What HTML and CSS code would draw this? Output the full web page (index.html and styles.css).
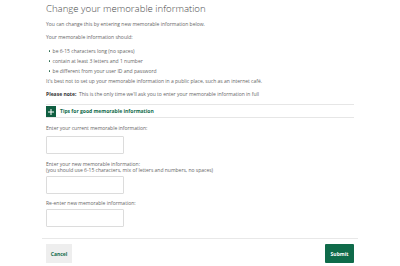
FILE: index.html
```html
<!DOCTYPE html>
<html>
<head>
<meta charset="utf-8">
<link rel="stylesheet" href="styles.css">
</head>
<body>
<div class="page">
  <div class="content">
    <h1 class="title">Change your memorable information</h1>
    <p class="p1">You can change this by entering new memorable information below.</p>
    <p class="p2">Your memorable information should:</p>
    <ul class="rules">
      <li>be 6-15 characters long (no spaces)</li>
      <li>contain at least 3 letters and 1 number</li>
      <li>be different from your user ID and password</li>
    </ul>
    <p class="p3">It's best not to set up your memorable information in a public place, such as an internet café.</p>
    <p class="note"><strong>Please note:</strong>&nbsp; This is the only time we'll ask you to enter your memorable information in full</p>
    <div class="tips">
      <span class="plus"><svg width="6" height="6" viewBox="0 0 6 6"><path d="M3 0V6M0 3H6" stroke="#fff" stroke-width="1"/></svg></span>
      <span class="tips-text">Tips for good memorable information</span>
    </div>
    <label class="label l1">Enter your current memorable information:</label>
    <div class="input i1"></div>
    <label class="label l2">Enter your new memorable information:</label>
    <div class="hint">(you should use 6-15 characters, mix of letters and numbers, no spaces)</div>
    <div class="input i2"></div>
    <label class="label l3">Re-enter new memorable information:</label>
    <div class="input i3"></div>
  </div>
  <div class="divider"></div>
  <div class="actions">
    <button class="btn cancel">Cancel</button>
    <button class="btn submit">Submit</button>
  </div>
</div>
</body>
</html>
```
FILE: styles.css
```css
html, body {
  margin: 0;
  padding: 0;
  background: #fff;
}
body {
  font-family: "Open Sans", "Liberation Sans", sans-serif;
  color: #666;
  font-size: 5px;
  line-height: 7px;
}
.page {
  width: 316px;
  margin-left: 42px;
}
.content {
  padding: 0 4px;
  display: flex;
  flex-direction: column;
}
.title {
  margin: 2px 0 0;
  font-size: 9.6px;
  line-height: 14px;
  font-weight: 300;
  color: #4a4a4a;
}
p { margin: 0; }
.p1 { margin-top: 4.5px; }
.p2 { margin-top: 6px; }
.rules {
  list-style: none;
  margin: 7px 0 0;
  padding: 0;
  display: flex;
  flex-direction: column;
  gap: 3px;
}
.rules li {
  display: flex;
  align-items: center;
  gap: 2.5px;
  padding-left: 2.5px;
}
.rules li::before {
  content: "";
  width: 1.6px;
  height: 1.6px;
  border-radius: 50%;
  background: #2a6a4e;
}
.p3 { margin-top: 3px; }
.note { margin-top: 6px; }
.note strong { color: #333; font-weight: 700; }
.tips {
  margin-top: 6.5px;
  border-top: 1px solid #e6e6e6;
  border-bottom: 1px solid #e6e6e6;
  height: 12px;
  display: flex;
  align-items: center;
  gap: 4px;
}
.plus {
  width: 10px;
  height: 11px;
  background: #0f5e41;
  display: flex;
  align-items: center;
  justify-content: center;
  margin-top: 1px;
}
.plus svg { display: block; }
.tips-text {
  color: #0f6b4a;
  font-weight: 700;
}
.label { display: block; }
.l1 { margin-top: 6.5px; }
.input {
  width: 76px;
  height: 16px;
  border: 1px solid #dcdcdc;
  border-radius: 1px;
  background: #fff;
}
.i1 { margin-top: 4.5px; }
.l2 { margin-top: 6.5px; line-height: 6px; }
.hint { line-height: 6px; }
.i2 { margin-top: 3.5px; }
.l3 { margin-top: 6px; }
.i3 { margin-top: 2px; }
.divider {
  margin-top: 10.5px;
  height: 1px;
  background: #e8e8e8;
}
.actions {
  margin-top: 5.5px;
  padding: 0 4px;
  display: flex;
  justify-content: space-between;
}
.btn {
  border: 0;
  height: 19px;
  padding: 0;
  font-family: "Open Sans", "Liberation Sans", sans-serif;
  font-size: 5px;
  font-weight: 700;
}
.cancel {
  width: 26px;
  background: #eeeeee;
  color: #0f6b4a;
}
.submit {
  width: 29px;
  background: #0f6b4a;
  color: #fff;
  border-radius: 1px;
}
```
